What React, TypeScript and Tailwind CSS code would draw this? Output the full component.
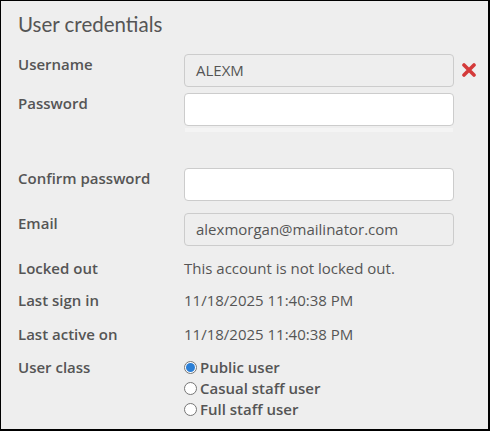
import React from "react";

function Row({ label, children, className = "" }: { label: string; children: React.ReactNode; className?: string }) {
  return (
    <div className={"flex " + className}>
      <div className="w-[166px] shrink-0 text-[15px] leading-[20px] font-semibold text-[#555]">{label}</div>
      <div className="flex-1">{children}</div>
    </div>
  );
}

function Radio({ checked, label }: { checked?: boolean; label: string }) {
  return (
    <div className="flex items-center h-[21px]">
      <span className="w-[13px] h-[13px] rounded-full border border-[#767676] bg-white flex items-center justify-center mr-[3px]">
        {checked ? <span className="w-[9px] h-[9px] rounded-full bg-[#2b7fd6]" /> : null}
      </span>
      <span className="text-[15px] font-semibold text-[#555]">{label}</span>
    </div>
  );
}

export default function App() {
  return (
    <div className="w-[490px] h-[431px] bg-[#eeeeee] border-black border-l border-t border-r-2 border-b-2 font-['Open_Sans',sans-serif] text-[#555] pl-[17px] overflow-hidden">
      <div className="pt-[10px] text-[20.5px] leading-[26px] font-['Lato',sans-serif] text-[#555]">User credentials</div>
      <Row label="Username" className="mt-[17px]">
        <div className="flex items-center">
          <div className="w-[270px] h-[33px] rounded-[4px] border border-[#cccccc] bg-[#eeeeee] px-[11px] flex items-center text-[15px]">ALEXM</div>
          <svg className="ml-[8px] mb-[2px]" width="14" height="14" viewBox="0 0 14 14">
            <path d="M2 2 L12 12 M12 2 L2 12" stroke="#d43a3a" strokeWidth="3.6" strokeLinecap="round" />
          </svg>
        </div>
      </Row>
      <Row label="Password" className="mt-[6px]">
        <div className="w-[270px] h-[33px] rounded-[4px] border border-[#cccccc] bg-white" />
        <div className="w-[268px] ml-[1px] mt-[2px] h-[4px] bg-[#f4f4f4]" />
      </Row>
      <Row label="Confirm password" className="mt-[36px]">
        <div className="w-[270px] h-[33px] rounded-[4px] border border-[#cccccc] bg-white" />
      </Row>
      <Row label="Email" className="mt-[12px]">
        <div className="w-[270px] h-[33px] rounded-[4px] border border-[#cccccc] bg-[#eeeeee] px-[11px] flex items-center text-[15px]">alexmorgan@mailinator.com</div>
      </Row>
      <Row label="Locked out" className="mt-[12px]">
        <div className="text-[15px] leading-[20px]">This account is not locked out.</div>
      </Row>
      <Row label="Last sign in" className="mt-[12px]">
        <div className="text-[15px] leading-[20px]">11/18/2025 11:40:38 PM</div>
      </Row>
      <Row label="Last active on" className="mt-[14px]">
        <div className="text-[15px] leading-[20px]">11/18/2025 11:40:38 PM</div>
      </Row>
      <Row label="User class" className="mt-[13px]">
        <div>
          <Radio checked label="Public user" />
          <Radio label="Casual staff user" />
          <Radio label="Full staff user" />
        </div>
      </Row>
    </div>
  );
}
